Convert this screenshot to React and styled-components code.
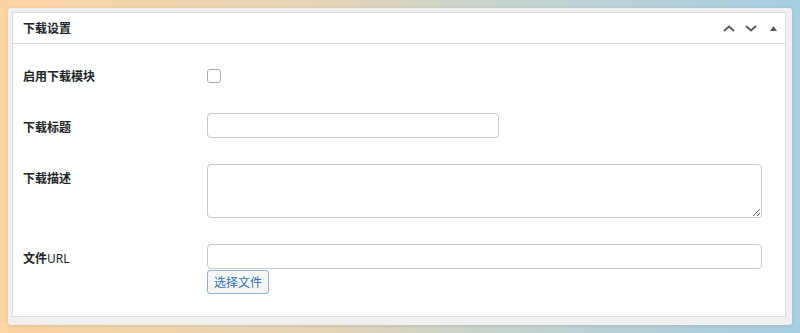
import React from "react";
import styled, { createGlobalStyle } from "styled-components";

const GlobalStyle = createGlobalStyle`
  html, body {
    margin: 0;
    padding: 0;
  }
  body {
    width: 800px;
    height: 333px;
    overflow: hidden;
    background: linear-gradient(90deg, #fcd4a4 0%, #e6d6b8 40%, #c9d3cc 60%, #a7cfe3 100%);
    font-family: "Noto Sans", "Noto Sans CJK SC", sans-serif;
    color: #1d2327;
  }
`;

const Page = styled.div`
  padding: 8px;
  box-sizing: border-box;
  height: 333px;
`;

const Frame = styled.div`
  background: #f0f0f1;
  border-radius: 3px;
  box-shadow: 0 1px 4px rgba(0, 0, 0, 0.12);
  padding: 4px 6px 8px 4px;
  height: 317px;
  box-sizing: border-box;
`;

const Panel = styled.div`
  background: #fff;
  border: 1px solid #dcdcde;
  height: 100%;
  box-sizing: border-box;
`;

const Header = styled.div`
  display: flex;
  align-items: center;
  justify-content: space-between;
  height: 30px;
  padding: 0 8px 0 10px;
  border-bottom: 1px solid #dcdcde;
`;

const Title = styled.h2`
  margin: 0;
  font-size: 12px;
  font-weight: 700;
  line-height: 17px;
`;

const Tools = styled.div`
  display: flex;
  align-items: center;
  gap: 10px;
  color: #50575e;
`;

const ToolButton = styled.span`
  display: flex;
  align-items: center;
  justify-content: center;
  width: ${(p) => p.$w}px;
  height: 12px;
  margin-left: ${(p) => p.$ml || 0}px;
`;

const Body = styled.div`
  padding: 10px 23px 0 10px;
`;

const Row = styled.div`
  display: grid;
  grid-template-columns: 184px 1fr;
  align-items: ${(p) => (p.$center ? "center" : "start")};
`;

const Label = styled.div`
  font-size: 12px;
  font-weight: 700;
  line-height: 17px;
  padding-top: ${(p) => (p.$center ? 0 : 21)}px;
  color: #1d2327;
`;

const Plain = styled.span`
  font-weight: 400;
`;

const Cell = styled.div`
  display: flex;
  flex-direction: column;
  align-items: flex-start;
  padding: 15px 0 ${(p) => p.$pb}px;
`;

const Checkbox = styled.input.attrs({ type: "checkbox" })`
  appearance: none;
  margin: 0;
  width: 14px;
  height: 14px;
  border: 1px solid #a7aaad;
  border-radius: 3px;
  background: #fff;
  box-sizing: border-box;
`;

const TextInput = styled.input.attrs({ type: "text" })`
  box-sizing: border-box;
  width: ${(p) => (p.$full ? "100%" : "292px")};
  height: 25px;
  margin: 0;
  border: 1px solid #c8c9cc;
  border-radius: 4px;
  background: #fff;
  outline: none;
  padding: 0 8px;
  font-size: 12px;
`;

const TextArea = styled.textarea`
  box-sizing: border-box;
  width: 100%;
  height: 54px;
  margin: 0;
  border: 1px solid #c8c9cc;
  border-radius: 4px;
  background: #fff;
  outline: none;
  padding: 4px 8px;
  font-size: 12px;
  font-family: inherit;
`;

const Button = styled.button`
  box-sizing: border-box;
  margin-top: 1px;
  height: 24px;
  padding: 0 6px;
  border: 1px solid #8fb1d6;
  border-radius: 3px;
  background: #f6f7f7;
  color: #2f6fae;
  font-size: 12px;
  font-family: "Noto Sans CJK SC", sans-serif;
  line-height: 22px;
`;

function Chevron({ up }) {
  return (
    <svg width="12" height="7" viewBox="0 0 12 7">
      <path
        d={up ? "M1 6 L6 1.5 L11 6" : "M1 1 L6 5.5 L11 1"}
        fill="none"
        stroke="currentColor"
        strokeWidth="1.8"
      />
    </svg>
  );
}

function Caret() {
  return (
    <svg width="7" height="5" viewBox="0 0 7 5">
      <path d="M0 5 L3.5 0 L7 5 Z" fill="currentColor" />
    </svg>
  );
}

export default function App() {
  return (
    <Page>
      <GlobalStyle />
      <Frame>
        <Panel>
          <Header>
            <Title>下载设置</Title>
            <Tools>
              <ToolButton $w={12}>
                <Chevron up />
              </ToolButton>
              <ToolButton $w={12}>
                <Chevron />
              </ToolButton>
              <ToolButton $w={7} $ml={3}>
                <Caret />
              </ToolButton>
            </Tools>
          </Header>
          <Body>
            <Row $center>
              <Label $center>启用下载模块</Label>
              <Cell $pb={15}>
                <Checkbox />
              </Cell>
            </Row>
            <Row>
              <Label>下载标题</Label>
              <Cell $pb={11}>
                <TextInput />
              </Cell>
            </Row>
            <Row>
              <Label>下载描述</Label>
              <Cell $pb={11}>
                <TextArea />
              </Cell>
            </Row>
            <Row>
              <Label>
                文件<Plain>URL</Plain>
              </Label>
              <Cell $pb={11}>
                <TextInput $full />
                <Button>选择文件</Button>
              </Cell>
            </Row>
          </Body>
        </Panel>
      </Frame>
    </Page>
  );
}
